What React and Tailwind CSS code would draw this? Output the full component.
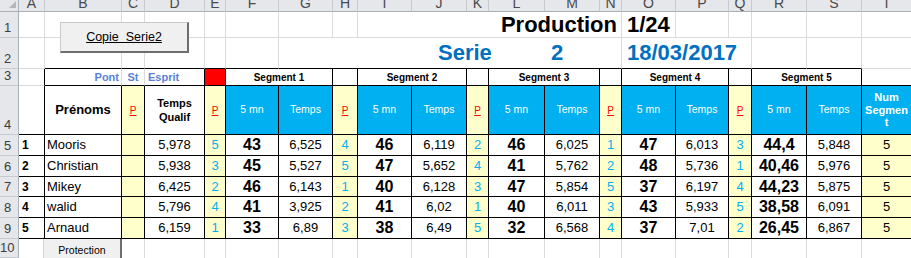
import React from 'react';

const SPAN = { 1: '', 2: 'col-span-2', 3: 'col-span-3', 6: 'col-span-6', 8: 'col-span-8' };
const RIGHT = {
    k: 'border-r border-r-black',
    g: 'border-r border-r-[#d9dbdd]',
    h: 'border-r border-r-[#aab0b7]',
    s: 'border-r border-r-[#c7cacf]',
    n: '',
};
const BOTTOM = {
    k: 'border-b border-b-black',
    g: 'border-b border-b-[#d9dbdd]',
    h: 'border-b border-b-[#aab0b7]',
    s: 'border-b border-b-[#c7cacf]',
    n: '',
};

const LETTERS = ['A', 'B', 'C', 'D', 'E', 'F', 'G', 'H', 'I', 'J', 'K', 'L', 'M', 'N', 'O', 'P', 'Q', 'R', 'S', 'T'];

const riders = [
    { n: '1', name: 'Mooris', q: '5,978', segs: [['5', '43', '6,525'], ['4', '46', '6,119'], ['2', '46', '6,025'], ['1', '47', '6,013'], ['3', '44,4', '5,848']] },
    { n: '2', name: 'Christian', q: '5,938', segs: [['3', '45', '5,527'], ['5', '47', '5,652'], ['4', '41', '5,762'], ['2', '48', '5,736'], ['1', '40,46', '5,976']] },
    { n: '3', name: 'Mikey', q: '6,425', segs: [['2', '46', '6,143'], ['1', '40', '6,128'], ['3', '47', '5,854'], ['5', '37', '6,197'], ['4', '44,23', '5,875']] },
    { n: '4', name: 'walid', q: '5,796', segs: [['4', '41', '3,925'], ['2', '41', '6,02'], ['1', '40', '6,011'], ['3', '43', '5,933'], ['5', '38,58', '6,091']] },
    { n: '5', name: 'Arnaud', q: '6,159', segs: [['1', '33', '6,89'], ['3', '38', '6,49'], ['5', '32', '6,568'], ['4', '37', '7,01'], ['2', '26,45', '6,867']] },
];

function Cell({ span = 1, r = 'g', b = 'g', className = '', children }) {
    return (
        <div className={`${SPAN[span]} ${RIGHT[r]} ${BOTTOM[b]} flex items-center min-w-0 whitespace-nowrap ${className}`}>
            {children}
        </div>
    );
}

function RowHead({ children, wide }) {
    return (
        <Cell r="h" b="s" className={`bg-[#e5e7ea] items-end pb-[2px] text-[13px] leading-[14px] text-[#3c3c3c] ${wide ? 'pl-0' : 'pl-[4px]'}`}>
            {children}
        </Cell>
    );
}

function RedP() {
    return (
        <Cell r="k" b="k" className="bg-[#ffffcc] justify-center">
            <span className="text-[10px] text-[#ff0000] underline">P</span>
        </Cell>
    );
}

function Cyan({ children, last }) {
    return (
        <Cell r={last ? 'n' : 'k'} b="k" className="bg-[#00b0f0] justify-center text-white text-[10.5px]">
            {children}
        </Cell>
    );
}

export default function App() {
    return (
        <div className="relative w-[911px] h-[258px] overflow-hidden bg-white font-['Liberation_Sans',Arial,sans-serif] text-black">
            <div className="grid grid-cols-[19px_26px_77px_23px_60px_21px_53px_54px_25px_54px_55px_22px_56px_55px_22px_54px_53px_23px_55px_55px_49px] grid-rows-[12px_26px_31px_17px_49px_21px_21px_20px_21px_21px_19px]">
                {/* column headers */}
                <Cell r="h" b="h" className="bg-[#e5e7ea] relative">
                    <svg className="absolute right-[2px] bottom-[3px]" width="7" height="7" viewBox="0 0 7 7">
                        <polygon points="7,0 7,7 0,7" fill="#b3b7bd" />
                    </svg>
                </Cell>
                {LETTERS.map((l, i) => (
                    <Cell key={l} r={i === 19 ? 'n' : 's'} b="h" className="bg-[#e5e7ea] justify-center items-start overflow-hidden text-[14px] text-[#4a4a4a]">
                        <span className="-mt-[4px] leading-[14px]">{l}</span>
                    </Cell>
                ))}

                {/* row 1 */}
                <RowHead>1</RowHead>
                {LETTERS.slice(0, 8).map(l => <Cell key={'r1' + l} />)}
                <Cell span={6} className="justify-end pr-[4px] font-bold text-[22px] leading-none">Production</Cell>
                <Cell className="pl-[5px] font-bold text-[22px] leading-none">1/24</Cell>
                <Cell />
                <Cell />
                <Cell />
                <Cell />
                <Cell r="n" />

                {/* row 2 */}
                <RowHead>2</RowHead>
                <Cell />
                <Cell b="k" />
                <Cell b="k" />
                <Cell b="k" />
                <Cell b="k" />
                <Cell b="k" />
                <Cell span={8} b="k" className="font-bold text-[22px] leading-none text-[#0070c0]">
                    <span className="ml-[159px] w-[113px]">Serie</span>
                    <span>2</span>
                </Cell>
                <Cell span={3} b="k" className="pl-[5px] font-bold text-[22px] leading-none text-[#0070c0]">18/03/2017</Cell>
                <Cell b="k" />
                <Cell b="k" />
                <Cell r="n" />

                {/* row 3 */}
                <RowHead>3</RowHead>
                <Cell r="k" />
                <Cell b="k" className="justify-end pr-[2px] font-bold text-[11px] text-[#5b7fd8]">Pont</Cell>
                <Cell b="k" className="justify-center font-bold text-[11px] text-[#5b7fd8]">St</Cell>
                <Cell r="k" b="k" className="pl-[3px] font-bold text-[11px] text-[#5b7fd8]">Esprit</Cell>
                <Cell r="k" b="k" className="bg-[#ff0000]" />
                {['1', '2', '3', '4', '5'].map((s, i) => (
                    <React.Fragment key={'seg' + s}>
                        <Cell span={2} r="k" b="k" className="justify-center font-bold text-[10px]">Segment {s}</Cell>
                        {i < 4 && <Cell r="k" b="k" />}
                    </React.Fragment>
                ))}
                <Cell r="n" b="k" />

                {/* row 4 */}
                <RowHead>4</RowHead>
                <Cell r="k" b="k" />
                <Cell r="k" b="k" className="justify-center font-bold text-[13px]">Prénoms</Cell>
                <RedP />
                <Cell r="k" b="k" className="justify-center text-center font-bold text-[11px] leading-[14px]">
                    <span>Temps<br />Qualif</span>
                </Cell>
                {[0, 1, 2, 3, 4].map(i => (
                    <React.Fragment key={'h4' + i}>
                        <RedP />
                        <Cyan>5 mn</Cyan>
                        <Cyan>Temps</Cyan>
                    </React.Fragment>
                ))}
                <Cell r="n" b="k" className="bg-[#00b0f0] justify-center text-center text-white font-bold text-[11px] leading-[12.5px]">
                    <span>Num<br />Segmen<br />t</span>
                </Cell>

                {/* rows 5-9 */}
                {riders.map((rd, i) => (
                    <React.Fragment key={rd.name}>
                        <RowHead>{5 + i}</RowHead>
                        <Cell r="k" b="k" className="pl-[3px] font-bold text-[12px]">{rd.n}</Cell>
                        <Cell r="k" b="k" className="pl-[2px] text-[13px]">{rd.name}</Cell>
                        <Cell r="k" b="k" className="bg-[#ffffcc]" />
                        <Cell r="k" b="k" className="justify-center text-[13px]">{rd.q}</Cell>
                        {rd.segs.map((s, j) => (
                            <React.Fragment key={rd.name + j}>
                                <Cell r="k" b="k" className="bg-[#ffffcc] justify-center text-[13px] text-[#00b0f0]">{s[0]}</Cell>
                                <Cell r="k" b="k" className="justify-center font-bold text-[16px]">{s[1]}</Cell>
                                <Cell r="k" b="k" className="justify-center text-[13px]">{s[2]}</Cell>
                            </React.Fragment>
                        ))}
                        <Cell r="n" b="k" className="bg-[#ffffcc] justify-center text-[13px]">5</Cell>
                    </React.Fragment>
                ))}

                {/* row 10 */}
                <RowHead wide>10</RowHead>
                {LETTERS.map((l, i) => <Cell key={'r10' + l} r={i === 19 ? 'n' : 'g'} b="n" />)}
            </div>

            {/* floating buttons */}
            <div className="absolute left-[60px] top-[22px] w-[129px] h-[31px] flex items-center justify-center bg-[#f0f0f0] border-t border-l border-[#c9c9c9] border-r-2 border-b-2 border-r-[#6e6e6e] border-b-[#6e6e6e]">
                <span className="text-[12.5px] underline whitespace-pre">Copie  Serie2</span>
            </div>
            <div className="absolute left-[43px] top-[239px] w-[79px] h-[24px] flex justify-center pt-[5px] bg-[#f0f0f0] border-l border-l-[#d6d6d6] border-r-2 border-r-[#6e6e6e]">
                <span className="text-[10.5px] leading-[12px]">Protection</span>
            </div>
        </div>
    );
}
